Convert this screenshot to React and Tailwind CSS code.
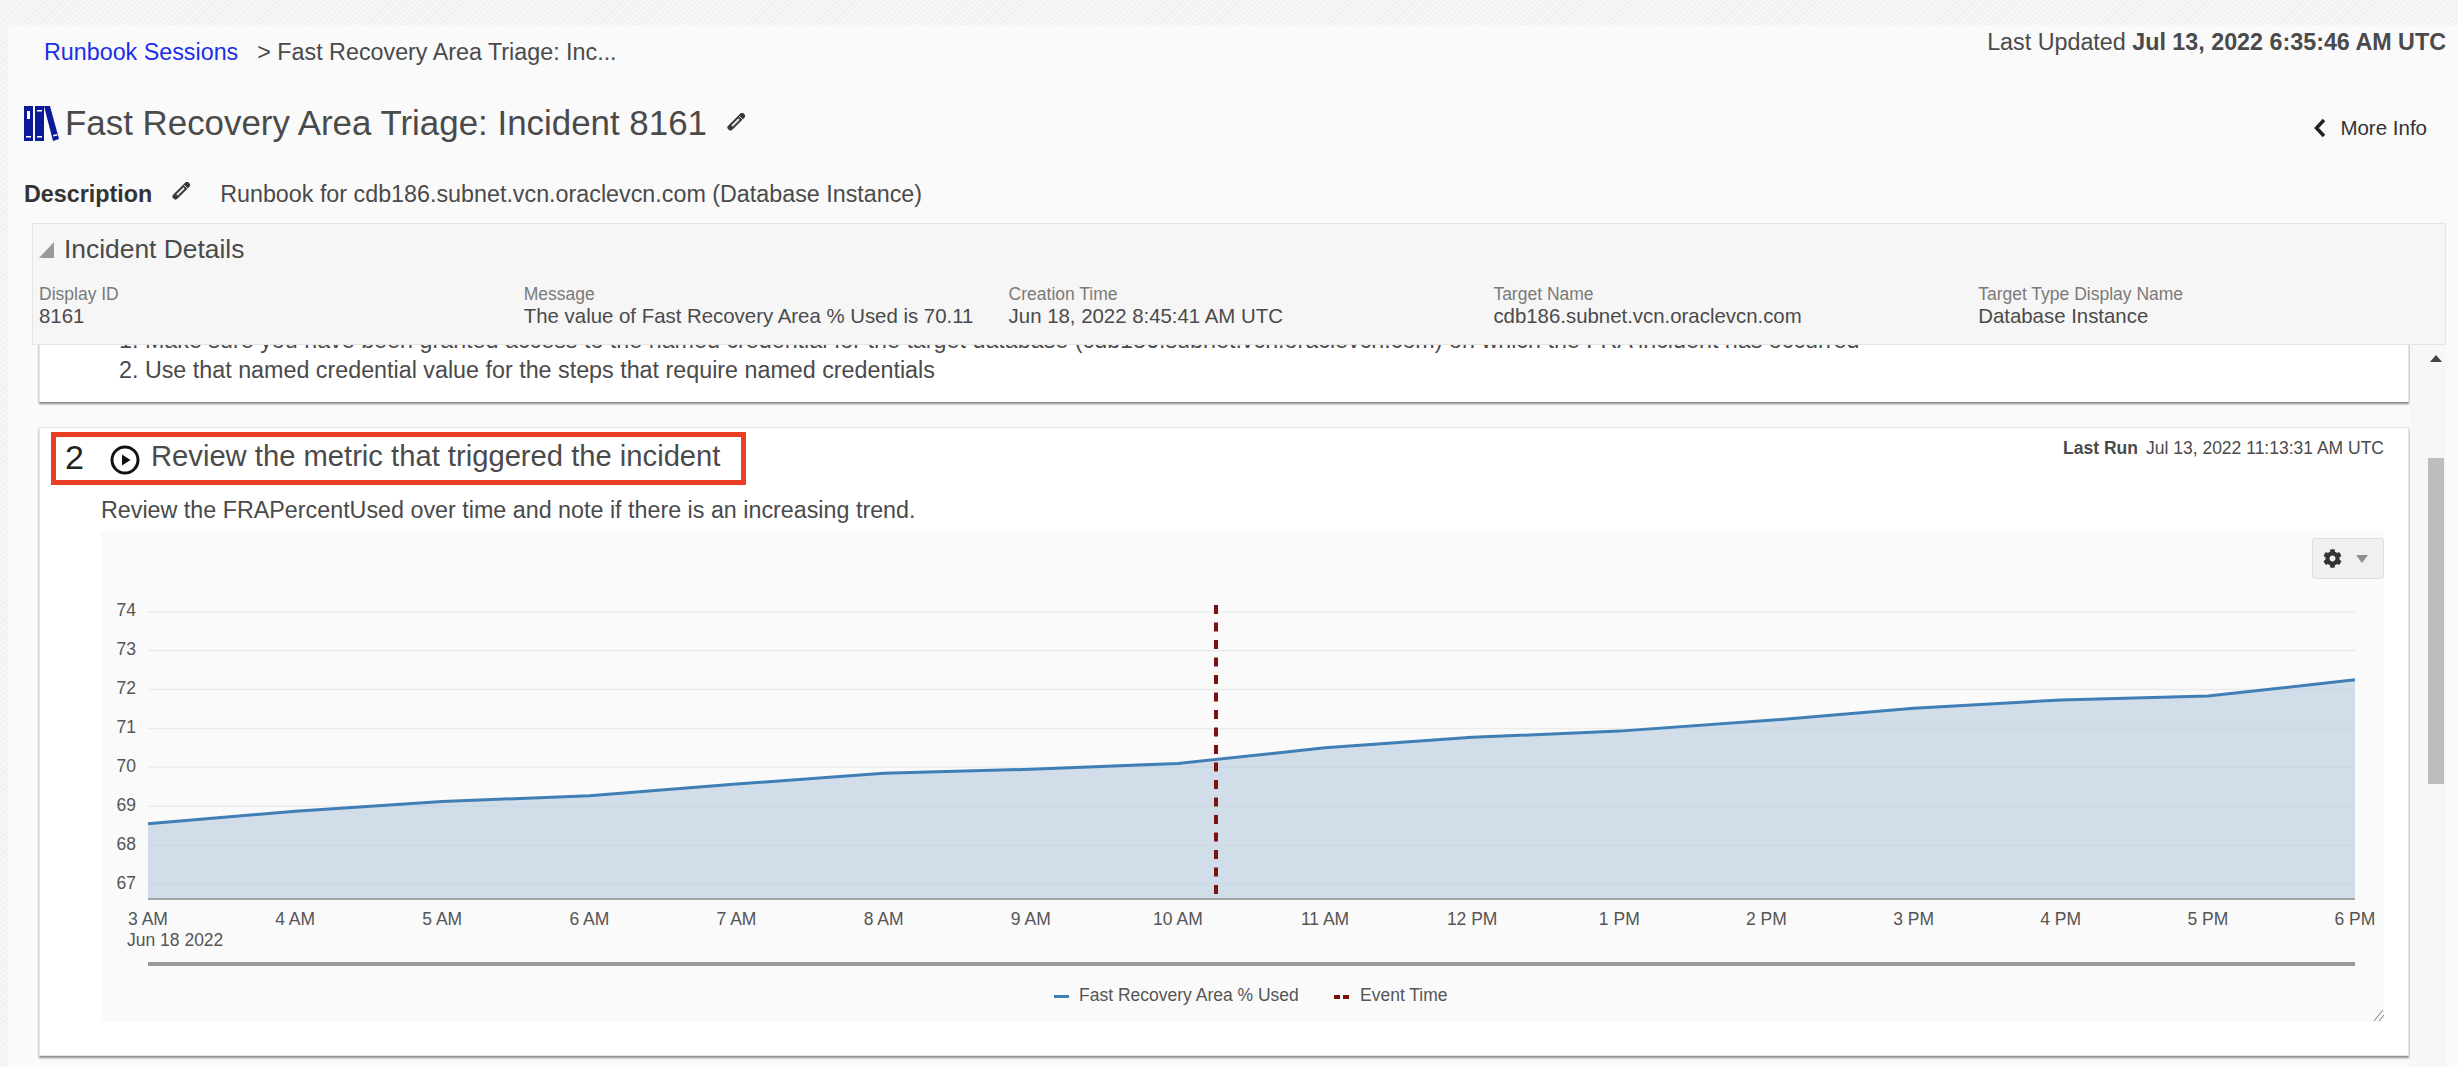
import React from 'react';
import { FaCog } from 'react-icons/fa';

const incidentFields = [
  ['Display ID', '8161'],
  ['Message', 'The value of Fast Recovery Area % Used is 70.11'],
  ['Creation Time', 'Jun 18, 2022 8:45:41 AM UTC'],
  ['Target Name', 'cdb186.subnet.vcn.oraclevcn.com'],
  ['Target Type Display Name', 'Database Instance'],
];

const hours = ['3 AM', '4 AM', '5 AM', '6 AM', '7 AM', '8 AM', '9 AM', '10 AM', '11 AM', '12 PM', '1 PM', '2 PM', '3 PM', '4 PM', '5 PM', '6 PM'];
const values = [68.55, 68.87, 69.12, 69.27, 69.57, 69.85, 69.95, 70.1, 70.5, 70.77, 70.93, 71.2, 71.52, 71.73, 71.83, 72.25];
const ticks = [74, 73, 72, 71, 70, 69, 68, 67];

// chart coordinates are page pixels, see the viewBox below
const xAt = (i) => 148 + i * 147.13;
const yAt = (v) => 884 - (v - 67) * 38.9;

const BooksIcon = () => (
  <svg width="36" height="36" viewBox="0 0 36 36" className="shrink-0">
    <rect x="0" y="0" width="9" height="35" fill="#0b1a96" />
    <rect x="11" y="0" width="9" height="35" fill="#0b1a96" />
    <polygon points="20,0 26,0 35,33 29,35" fill="#0b1a96" />
    <rect x="3" y="5" width="3" height="8" fill="#fff" />
    <rect x="13" y="4" width="5" height="1.5" fill="#fff" />
    <rect x="2" y="30" width="5" height="1.5" fill="#fff" />
    <rect x="13" y="30" width="5" height="1.5" fill="#fff" />
    <polygon points="29,29 33,28 33.5,29.5 29.5,30.5" fill="#fff" />
  </svg>
);

const PencilIcon = () => (
  <svg width="19" height="18" viewBox="0 0 19 18" className="shrink-0">
    <path d="M3.5 14.5 L15 3" stroke="#3a3a3a" strokeWidth="6" strokeLinecap="round" />
    <path d="M5 13 L12 6" stroke="#e8e8e8" strokeWidth="1.8" />
    <path d="M12.2 3.2 L15.6 6.6" stroke="#e8e8e8" strokeWidth="1" />
  </svg>
);

const PlayIcon = () => (
  <svg width="30" height="30" viewBox="0 0 30 30" className="mt-[5px] shrink-0">
    <circle cx="15" cy="15" r="13" fill="none" stroke="#111" strokeWidth="3" />
    <polygon points="12,9.5 20.5,15 12,20.5" fill="#111" />
  </svg>
);

const FraChart = () => {
  const line = values.map((v, i) => `${xAt(i)},${yAt(v)}`).join(' ');
  const area = `148,899 ${line} ${xAt(15)},899`;
  return (
    <svg width="2283" height="490" viewBox="101 532 2283 490" className="block">
      {ticks.map((t) => (
        <g key={t}>
          <line x1="148" x2="2355" y1={yAt(t)} y2={yAt(t)} stroke="#ebebeb" strokeWidth="1.5" />
          <text x="136" y={yAt(t) + 4.5} textAnchor="end" fontSize="17.5" fill="#555">{t}</text>
        </g>
      ))}
      <polygon points={area} fill="#bdd0e2" fillOpacity="0.68" />
      <polyline points={line} fill="none" stroke="#3f7fb5" strokeWidth="3" />
      <line x1="148" x2="2355" y1="899" y2="899" stroke="#a3a3a3" strokeWidth="2" />
      <line x1="1216" x2="1216" y1="605" y2="897" stroke="#7f1010" strokeWidth="4" strokeDasharray="9 8.5" />
      {hours.map((h, i) => (
        <text key={h} x={xAt(i)} y="925" textAnchor="middle" fontSize="17.5" fill="#555">{h}</text>
      ))}
      <text x="127" y="946" fontSize="17.5" fill="#555">Jun 18 2022</text>
      <rect x="148" y="962" width="2207" height="4" fill="#999" />
      <rect x="1054" y="995" width="15" height="3" fill="#3f7fb5" />
      <text x="1079" y="1001" fontSize="17.5" fill="#555">Fast Recovery Area % Used</text>
      <rect x="1334" y="995" width="6" height="4" fill="#7f1010" />
      <rect x="1343" y="995" width="6" height="4" fill="#7f1010" />
      <text x="1360" y="1001" fontSize="17.5" fill="#555">Event Time</text>
      <path d="M2374 1021 L2383 1010 M2379 1021 L2384 1015" stroke="#777" strokeWidth="1" />
    </svg>
  );
};

const App = () => {
  return (
    <div className="h-[1067px] w-full overflow-hidden pl-[8px] pt-[25px] font-['Liberation_Sans',Arial,sans-serif] text-[#4a4a4a] bg-[repeating-linear-gradient(135deg,#f1f1f1_0px,#f1f1f1_2px,#f7f7f7_2px,#f7f7f7_4px)]">
      <div className="flex h-[1042px] flex-col bg-[#fafafa]">
        <div className="flex h-[55px] shrink-0 items-start justify-between pl-[36px] pr-[12px]">
          <div className="flex h-[55px] items-center gap-[19px]">
            <a className="text-[23.3px] text-[#1a2fe8]">Runbook Sessions</a>
            <span className="text-[23.3px]">&gt; Fast Recovery Area Triage: Inc...</span>
          </div>
          <div className="text-[23.3px]">
            Last Updated <span className="font-bold">Jul 13, 2022 6:35:46 AM UTC</span>
          </div>
        </div>

        <div className="flex h-[87px] shrink-0 items-center pl-[16px] pr-[31px]">
          <BooksIcon />
          <h1 className="ml-[5px] text-[34.9px] leading-none font-normal">Fast Recovery Area Triage: Incident 8161</h1>
          <span className="ml-[20px] -mt-[4px]"><PencilIcon /></span>
          <div className="ml-auto flex items-center gap-[14px] pt-[9px] text-[20.5px] text-[#333]">
            <svg width="13" height="20" viewBox="0 0 13 20">
              <path d="M11 2 L3.5 10 L11 18" fill="none" stroke="#222" strokeWidth="3.5" />
            </svg>
            More Info
          </div>
        </div>

        <div className="flex h-[56px] shrink-0 items-center pl-[16px] pb-[2px]">
          <span className="text-[23.3px] font-bold text-[#333]">Description</span>
          <span className="ml-[20px] -mt-[6px]"><PencilIcon /></span>
          <span className="ml-[29px] text-[23.3px]">Runbook for cdb186.subnet.vcn.oraclevcn.com (Database Instance)</span>
        </div>

        <div className="relative z-10 ml-[24px] mr-[12px] h-[122px] shrink-0 border border-[#e4e4e4] bg-[#f6f6f6] px-[6px]">
          <div className="flex h-[50px] items-center gap-[9px] pt-[2px]">
            <svg width="16" height="18" viewBox="0 0 16 18" className="shrink-0">
              <polygon points="15,1 15,17 0,17" fill="#9a9a9a" />
            </svg>
            <span className="text-[26.4px]">Incident Details</span>
          </div>
          <div className="grid grid-cols-[repeat(5,484.8px)] pt-[9px]">
            {incidentFields.map(([label, value]) => (
              <div key={label}>
                <div className="text-[17.5px] leading-[22px] text-[#7a7a7a]">{label}</div>
                <div className="-mt-[1px] text-[20.4px] leading-[24px]">{value}</div>
              </div>
            ))}
          </div>
        </div>

        <div className="flex min-h-0 flex-1 overflow-hidden pl-[31px]">
          <div className="w-[2370px] shrink-0">
            <div className="-mt-[20px] h-[77px] border-x border-[#e4e4e4] bg-white pl-[79px] text-[23.3px] leading-[30px] shadow-[0_2px_2px_#8a8a8a]">
              <div>1. Make sure you have been granted access to the named credential for the target database (cdb186.subnet.vcn.oraclevcn.com) on which the FRA incident has occurred</div>
              <div>2. Use that named credential value for the steps that require named credentials</div>
            </div>

            <div className="mt-[25px] h-[629px] border border-[#e4e4e4] bg-white pl-[11px] pr-[24px] pt-[4px] shadow-[0_2px_2px_#8a8a8a]">
              <div className="flex items-start justify-between">
                <div className="flex h-[53px] w-[695px] items-center border-[5px] border-[#ea3f25] pb-[3px] pl-[9px]">
                  <span className="w-[45px] text-[34px] text-[#222]">2</span>
                  <PlayIcon />
                  <span className="ml-[11px] text-[29.2px]">Review the metric that triggered the incident</span>
                </div>
                <div className="flex gap-[8px] pt-[3px] text-[17.5px]">
                  <span className="font-bold">Last Run</span>
                  <span>Jul 13, 2022 11:13:31 AM UTC</span>
                </div>
              </div>
              <div className="ml-[50px] flex h-[47px] items-center pt-[4px] text-[23.3px]">
                Review the FRAPercentUsed over time and note if there is an increasing trend.
              </div>
              <div className="relative ml-[50px] h-[490px] bg-[#fafafa]">
                <FraChart />
                <div className="absolute right-0 top-[6px] flex h-[41px] w-[72px] items-center gap-[14px] rounded-[3px] border border-[#dcdcdc] bg-[#f0f0f0] pl-[10px]">
                  <FaCog className="text-[19px] text-[#333]" />
                  <svg width="12" height="8" viewBox="0 0 12 8">
                    <polygon points="0,0 12,0 6,8" fill="#8e8e8e" />
                  </svg>
                </div>
              </div>
            </div>
          </div>

          <div className="ml-[1px] flex w-[36px] shrink-0 flex-col bg-[#f7f7f7] pl-[18px]">
            <svg width="12" height="7" viewBox="0 0 12 7" className="ml-[2px] mt-[10px] shrink-0">
              <polygon points="6,0 12,7 0,7" fill="#444" />
            </svg>
            <div className="mt-[96px] h-[326px] w-[16px] bg-[#bdbdbd]" />
          </div>
        </div>
      </div>
    </div>
  );
};

export default App;
